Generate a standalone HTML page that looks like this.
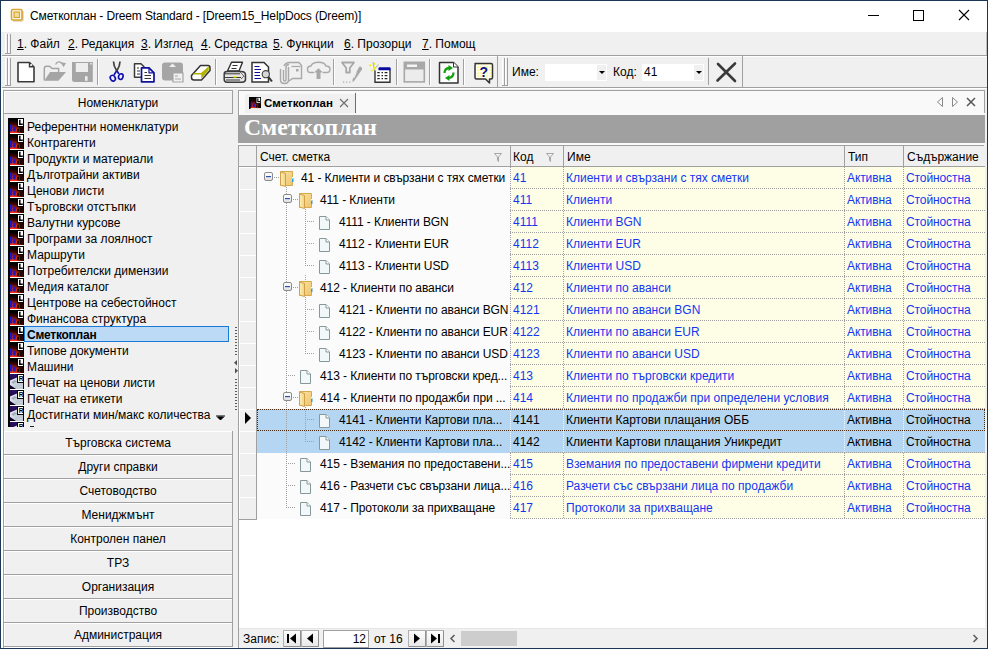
<!DOCTYPE html><html><head><meta charset="utf-8"><style>
*{margin:0;padding:0;box-sizing:border-box}
html,body{width:988px;height:649px;overflow:hidden;background:#f0f0f0;font-family:"Liberation Sans",sans-serif;font-size:12px;color:#000}
div,span{position:absolute}
.t{white-space:nowrap;line-height:14px}
.g{background:#a0a0a0}
.w{background:#fff}
.b{color:#1436f0}
.btn{left:3px;width:230px;height:24px;border-left:1px solid #a0a0a0;border-right:1px solid #a0a0a0;border-bottom:1px solid #a0a0a0;background:#f0f0f0;text-align:center;line-height:24px}
.btn:before{content:"";position:absolute;left:0;top:0;right:0;height:1px;background:#fff}
.btn:after{content:"";position:absolute;left:0;top:0;bottom:0;width:1px;background:#fff}
.li{left:27px;height:16px;line-height:19px;white-space:nowrap}
.dv{width:1px;background-image:linear-gradient(#a0a0a0 50%,transparent 50%);background-size:1px 2px}
.dh{height:1px;background-image:linear-gradient(90deg,#a0a0a0 50%,transparent 50%);background-size:2px 1px}
</style></head><body>
<div class="w" style="left:1px;top:1px;width:986px;height:31px"></div>
<svg style="position:absolute;left:10px;top:8px" width="14" height="14" viewBox="0 0 14 14"><rect x="1.5" y="1.5" width="10.5" height="10.5" rx="1.5" fill="#fff" stroke="#d8a52a" stroke-width="1.6"/><path d="M13 3V12.5Q13 13 12.5 13H3" fill="none" stroke="#c8952a" stroke-width="1" opacity="0.6"/><rect x="4" y="4" width="5.5" height="5.5" fill="#f3dc9a" stroke="#d8a52a" stroke-width="1.2"/></svg>
<div class="t" style="left:30px;top:9px;letter-spacing:-0.14px;color:#000">Сметкоплан - Dreem Standard - [Dreem15_HelpDocs (Dreem)]</div>
<div style="left:868px;top:15px;width:11px;height:1px;background:#000"></div>
<div style="left:913px;top:10px;width:11px;height:11px;border:1px solid #000"></div>
<svg style="position:absolute;left:958px;top:9px" width="12" height="12"><path d="M1 1L11 11M11 1L1 11" stroke="#000" stroke-width="1.1"/></svg>
<div style="left:2px;top:32px;width:985px;height:23px;background:#f0f0f0"></div>
<div class="w" style="left:5px;top:34px;width:1px;height:19px"></div>
<div class="g" style="left:7px;top:34px;width:1px;height:19px"></div>
<div class="w" style="left:8px;top:34px;width:1px;height:19px"></div>
<div class="g" style="left:10px;top:34px;width:1px;height:19px"></div>
<div class="g" style="left:5px;top:53px;width:6px;height:1px"></div>
<div class="t" style="left:17px;top:37px"><u>1</u>. Файл</div>
<div class="t" style="left:68px;top:37px"><u>2</u>. Редакция</div>
<div class="t" style="left:141px;top:37px"><u>3</u>. Изглед</div>
<div class="t" style="left:201px;top:37px"><u>4</u>. Средства</div>
<div class="t" style="left:273px;top:37px"><u>5</u>. Функции</div>
<div class="t" style="left:344px;top:37px"><u>6</u>. Прозорци</div>
<div class="t" style="left:422px;top:37px"><u>7</u>. Помощ</div>
<div class="g" style="left:2px;top:55px;width:985px;height:1px"></div>
<div class="w" style="left:2px;top:56px;width:985px;height:1px"></div>
<div class="w" style="left:5px;top:58px;width:1px;height:27px"></div>
<div class="g" style="left:7px;top:58px;width:1px;height:27px"></div>
<div class="w" style="left:8px;top:58px;width:1px;height:27px"></div>
<div class="g" style="left:10px;top:58px;width:1px;height:27px"></div>
<div class="g" style="left:5px;top:85px;width:6px;height:1px"></div>
<div class="g" style="left:742px;top:56px;width:1px;height:31px"></div>
<div class="g" style="left:2px;top:87px;width:985px;height:1px"></div>
<div class="w" style="left:2px;top:88px;width:985px;height:1px"></div>
<div class="g" style="left:97px;top:59px;width:1px;height:26px"></div>
<div class="w" style="left:98px;top:59px;width:1px;height:26px"></div>
<div class="g" style="left:215px;top:59px;width:1px;height:26px"></div>
<div class="w" style="left:216px;top:59px;width:1px;height:26px"></div>
<div class="g" style="left:333px;top:59px;width:1px;height:26px"></div>
<div class="w" style="left:334px;top:59px;width:1px;height:26px"></div>
<div class="g" style="left:396px;top:59px;width:1px;height:26px"></div>
<div class="w" style="left:397px;top:59px;width:1px;height:26px"></div>
<div class="g" style="left:429px;top:59px;width:1px;height:26px"></div>
<div class="w" style="left:430px;top:59px;width:1px;height:26px"></div>
<div class="g" style="left:463px;top:59px;width:1px;height:26px"></div>
<div class="w" style="left:464px;top:59px;width:1px;height:26px"></div>
<svg style="position:absolute;left:0;top:56px" width="988" height="31" viewBox="0 56 988 31">
<!-- new doc -->
<path d="M18 62.5H29.5L34 67V81.8H18Z" fill="#fff" stroke="#3a3a3a" stroke-width="1.6" stroke-linejoin="round"/>
<path d="M29.5 63V66.8H33.5" fill="none" stroke="#3a3a3a" stroke-width="1.4"/>
<rect x="30.6" y="64.1" width="1.6" height="1.6" fill="#fff"/>
<!-- open folder gray -->
<path d="M44.3 80.5V68.8Q44.3 66.3 46.5 66.3H48.5Q50 66.3 51 67.5L52 68.5H58.6V72" fill="none" stroke="#a5a5a5" stroke-width="1.5"/>
<path d="M44.3 80.8L50 72H66L58.5 80.8Z" fill="#a5a5a5"/>
<path d="M55.5 64.5Q58.5 59.5 62.5 64" fill="none" stroke="#a5a5a5" stroke-width="1.4"/>
<path d="M61 62.5L66 63L63.5 67.2Z" fill="#a5a5a5"/>
<!-- save gray -->
<path d="M72 62H92.8V82H74.5Q72 82 72 79.5Z" fill="#a5a5a5"/>
<rect x="75.8" y="63" width="12.2" height="9" fill="#ededed"/>
<rect x="85" y="76.2" width="2.6" height="4.6" fill="#ededed"/>
<rect x="90.2" y="63" width="1.5" height="1.5" fill="#ededed"/>
<!-- scissors -->
<path d="M113.5 61.5Q113.5 66 116.8 71M120 61.5Q120 66 116.8 71" fill="none" stroke="#404040" stroke-width="1.7"/>
<path d="M116.5 71L114 75M117 71L119 74" stroke="#1010b0" stroke-width="1.6"/>
<ellipse cx="112.8" cy="78.2" rx="2.4" ry="3" transform="rotate(-30 112.8 78.2)" fill="none" stroke="#1010b0" stroke-width="1.6"/>
<ellipse cx="120.8" cy="76.6" rx="2.2" ry="2.9" transform="rotate(20 120.8 76.6)" fill="none" stroke="#1010b0" stroke-width="1.6"/>
<!-- copy -->
<path d="M134.5 63.8H141L144 66.8V77.2H134.5Z" fill="#fff" stroke="#3a3a3a" stroke-width="1.5" stroke-linejoin="round"/>
<path d="M137 68H139M137 71H140M137 74H140" stroke="#333" stroke-width="1"/>
<path d="M141.5 67.8H149L154 72.8V81.8H141.5Z" fill="#fff" stroke="#10109a" stroke-width="1.7" stroke-linejoin="round"/>
<path d="M149 67.8V72.8H154" fill="none" stroke="#10109a" stroke-width="1.2"/>
<path d="M144.5 72.5H147M144.5 75.5H151M144.5 78.5H151" stroke="#333" stroke-width="1"/>
<!-- paste gray -->
<rect x="162" y="62.5" width="21" height="18" rx="3" fill="#a5a5a5"/>
<path d="M169 67L172.5 63.5L176 67Z" fill="#f0f0f0"/>
<path d="M173 73H183V82H173Z" fill="#f0f0f0" stroke="#a5a5a5" stroke-width="1.2"/>
<path d="M175 76H178M175 79H181" stroke="#a5a5a5" stroke-width="1"/>
<!-- eraser -->
<path d="M200.5 65.5H208Q210 65.5 210 68V70.5L201.5 80H194Q191.5 80 191.5 77.5V75.5Z" fill="#fff" stroke="#333" stroke-width="1.5" stroke-linejoin="round"/>
<path d="M193.5 73H201L208.8 66.3V70.3L201.2 78.6V74.6H193.5Z" fill="#b4b400"/>
<!-- printer -->
<path d="M227.5 71L231.5 62.3H242.5L239 71Z" fill="#fff" stroke="#333" stroke-width="1.4" stroke-linejoin="round"/>
<path d="M232.5 65.5H237.5M231.5 68.5H236.5" stroke="#333" stroke-width="1.1"/>
<path d="M224.2 74Q224.2 71.5 227 71.5H241Q245.5 71.5 245.5 75V79.5Q245.5 82.2 242 82.2H227Q224.2 82.2 224.2 79.5Z" fill="#e4e4e4" stroke="#3a3a3a" stroke-width="1.5"/>
<path d="M225 73.8H240M225 77.5H241M226 80H240" stroke="#3a3a3a" stroke-width="1"/>
<path d="M240 72L244.5 76.5M241 79L244 76" stroke="#555" stroke-width="0.8"/>
<rect x="233.5" y="76" width="3" height="1.6" fill="#f0f000"/>
<!-- print preview -->
<path d="M252 62.5H264L268.5 67V82H252Z" fill="#fff" stroke="#333" stroke-width="1.5"/>
<path d="M254.5 66.5H259.5M254.5 69.5H261M254.5 72.5H260M254.5 75.5H260M254.5 78.5H261" stroke="#0a0aa0" stroke-width="1.2"/>
<circle cx="265.8" cy="74.2" r="3.6" fill="#d8d8d8" stroke="#444" stroke-width="1.1"/>
<path d="M268.5 77L272 81.5" stroke="#333" stroke-width="2"/>
<!-- attach gray -->
<path d="M280.5 69V80Q280.5 83.5 284.5 83.5Q288.5 83.5 288.5 80V67" fill="none" stroke="#a8a8a8" stroke-width="1.4"/>
<path d="M283.5 70V79.5Q283.5 81 284.8 81Q286 81 286 79.5V67Q286 64.5 289 64.5" fill="none" stroke="#a8a8a8" stroke-width="1.4"/>
<path d="M284 66Q285.5 62.5 290 62.5H299L301.5 65.5V78.5H292.5L289 81" fill="none" stroke="#a8a8a8" stroke-width="1.4"/>
<path d="M291.5 66.5H300.5" stroke="#a8a8a8" stroke-width="1.2"/>
<rect x="296" y="69" width="2.5" height="2.5" fill="#a8a8a8"/>
<!-- cloud gray -->
<path d="M314 72.5H310.5Q307.5 72.5 307.5 69.2Q307.5 66 311 66Q312.5 62.3 318.5 62.3Q324.5 62.3 326 66Q330 66 330 69.5Q330 72.5 326.5 72.5H323" fill="none" stroke="#a8a8a8" stroke-width="1.4"/>
<path d="M316.5 79V72.5H314L318.5 68.3L323 72.5H320.5V79Z" fill="#a8a8a8"/>
<!-- filter gray -->
<path d="M342 62.5H354L349.8 68V72.5H346.2V68Z" fill="none" stroke="#a8a8a8" stroke-width="1.8" stroke-linejoin="round"/>
<path d="M360 66.5Q362.5 67 362 69.5L354.5 80.5L352.5 82.2L352.6 79.2L358.8 67.6Q359.2 66.6 360 66.5Z" fill="#a8a8a8"/>
<path d="M356.5 72.5L353.8 78" stroke="#f0f0f0" stroke-width="0.9"/>
<rect x="343" y="81.5" width="1.2" height="1.2" fill="#a8a8a8"/><rect x="346" y="81.5" width="1.2" height="1.2" fill="#a8a8a8"/><rect x="349.3" y="81.5" width="1.2" height="1.2" fill="#a8a8a8"/>
<!-- calendar w sparkle -->
<path d="M373 62L374.5 71M378.5 64.5L374.5 69" stroke="#9a9a9a" stroke-width="0.8"/>
<circle cx="370.2" cy="65.3" r="1.1" fill="#f6f000"/><circle cx="374.6" cy="63.8" r="0.9" fill="#f6f000"/><circle cx="374.5" cy="68" r="1.6" fill="#f6f000"/><circle cx="371.8" cy="70.6" r="1" fill="#f6f000"/>
<path d="M375 70.5V82.2H390V69.5" fill="#fff" stroke="#333" stroke-width="1.4"/>
<path d="M378.5 68.2Q378.5 67.2 379.5 67.2H389.5Q390.6 67.2 390.6 68.2V70.2H378.5Z" fill="#0a0aa0"/>
<path d="M377.3 72.6H379.7M381.5 72.6H383M384.6 72.6H387.4M377.3 75.6H379.7M381.5 75.6H383M384.6 75.6H387.4M377.3 78.6H379.7M381.5 78.6H383M384.6 78.6H387.4" stroke="#222" stroke-width="1.2"/>
<!-- window gray -->
<rect x="404.3" y="62.3" width="20" height="19.6" fill="#ececec" stroke="#a8a8a8" stroke-width="1.6"/>
<rect x="404" y="62" width="20.6" height="7.5" fill="#a8a8a8"/>
<rect x="407" y="64.5" width="10" height="2.5" fill="#f4f4f4"/>
<!-- refresh -->
<path d="M439.5 62.5H453.5L458 67V83H439.5Z" fill="#fff" stroke="#333" stroke-width="1.5" stroke-linejoin="round"/>
<path d="M453.5 62.5V67H458" fill="#fff" stroke="#333" stroke-width="1"/>
<path d="M444.5 73Q444.5 68.2 449.5 67.8" fill="none" stroke="#10a010" stroke-width="2.2"/>
<path d="M448.5 65L453 68L448.5 71Z" fill="#10a010"/>
<path d="M453.5 72.5Q453.5 77.5 448.5 78" fill="none" stroke="#10a010" stroke-width="2.2"/>
<path d="M449.5 75L445 78L449.5 81Z" fill="#10a010"/>
<!-- help -->
<defs><pattern id="hp" x="0.5" y="0.5" width="3" height="3" patternUnits="userSpaceOnUse"><rect width="3" height="3" fill="#fff"/><rect width="1.2" height="1.2" fill="#f0f000"/></pattern></defs>
<path d="M475 63.5H491Q492.5 63.5 492.5 65V77.5Q492.5 79 491 79H489.5V83L485.5 79H476.5Q475 79 475 77.5V65Q475 63.5 476.5 63.5Z" fill="url(#hp)" stroke="#333" stroke-width="1.5" stroke-linejoin="round"/>
<text x="483.8" y="76.5" font-family="Liberation Sans" font-weight="bold" font-size="14" text-anchor="middle" fill="#10108a">?</text>
<!-- toolbar 1 end -->
<rect x="497" y="56" width="1" height="31" fill="#a0a0a0"/>
<!-- grip 2 -->
<rect x="502" y="58" width="1" height="27" fill="#fff"/>
<rect x="504" y="58" width="1" height="27" fill="#a0a0a0"/>
<rect x="505" y="58" width="1" height="27" fill="#fff"/>
<rect x="507" y="58" width="1" height="27" fill="#a0a0a0"/>
<rect x="502" y="85" width="6" height="1" fill="#a0a0a0"/>
<!-- combos -->
<rect x="545" y="64" width="62" height="17" fill="#fff"/>
<rect x="597" y="65" width="9" height="15" fill="#f0f0f0"/>
<path d="M599 71H605L602 74Z" fill="#000"/>
<rect x="642" y="64" width="62" height="17" fill="#fff"/>
<rect x="694" y="65" width="9" height="15" fill="#f0f0f0"/>
<path d="M696 71H702L699 74Z" fill="#000"/>
<!-- sep -->
<rect x="708" y="58" width="1" height="27" fill="#a0a0a0"/>
<!-- big X -->
<path d="M718 64L735 81M735 63.5L717.5 80.5" stroke="#3a3a3a" stroke-width="2.6" stroke-linecap="round"/>
</svg>
<div class="t" style="left:512px;top:65px">Име:</div>
<div class="t" style="left:613px;top:65px">Код:</div>
<div class="t" style="left:644px;top:65px">41</div>

<div class="w" style="left:1px;top:88px;width:2px;height:560px"></div>
<div class="w" style="left:1px;top:647px;width:986px;height:1px"></div>
<div class="g" style="left:3px;top:90px;width:1px;height:558px"></div>
<div class="btn" style="top:90px;border-top:1px solid #a0a0a0">Номенклатури</div>
<div style="left:8px;top:118px;width:16px;height:16px"><svg width="16" height="16" viewBox="0 0 16 16" style="position:absolute;left:0;top:0"><defs><radialGradient id="gl" cx="0.25" cy="1" r="1"><stop offset="0" stop-color="#ff3a10"/><stop offset="0.35" stop-color="#d02808"/><stop offset="0.7" stop-color="#3a0400"/><stop offset="1" stop-color="#000"/></radialGradient></defs><rect x="0" y="0" width="16" height="15" fill="#000"/><rect x="2" y="2" width="13" height="13" fill="url(#gl)"/><rect x="9.5" y="0.5" width="6" height="8" fill="#fff" stroke="#000" stroke-width="1"/><path d="M11.8 1.8V6.2H14.8" stroke="#000" stroke-width="1.5" fill="none"/><rect x="2" y="6.5" width="2.3" height="7" fill="#1818c8"/><rect x="5.2" y="9" width="2.5" height="4.5" fill="#1818c8"/><path d="M9 11H11V14H9ZM12 10H14V14H12Z" fill="#1a0800"/><rect x="0" y="15" width="16" height="1" fill="#fff"/><rect x="0" y="0" width="2" height="16" fill="#000"/></svg>
</div>
<div class="li" style="top:118px">Референтни номенклатури</div>
<div style="left:8px;top:134px;width:16px;height:16px"><svg width="16" height="16" viewBox="0 0 16 16" style="position:absolute;left:0;top:0"><defs><radialGradient id="gl" cx="0.25" cy="1" r="1"><stop offset="0" stop-color="#ff3a10"/><stop offset="0.35" stop-color="#d02808"/><stop offset="0.7" stop-color="#3a0400"/><stop offset="1" stop-color="#000"/></radialGradient></defs><rect x="0" y="0" width="16" height="15" fill="#000"/><rect x="2" y="2" width="13" height="13" fill="url(#gl)"/><rect x="9.5" y="0.5" width="6" height="8" fill="#fff" stroke="#000" stroke-width="1"/><path d="M11.8 1.8V6.2H14.8" stroke="#000" stroke-width="1.5" fill="none"/><rect x="2" y="6.5" width="2.3" height="7" fill="#1818c8"/><rect x="5.2" y="9" width="2.5" height="4.5" fill="#1818c8"/><path d="M9 11H11V14H9ZM12 10H14V14H12Z" fill="#1a0800"/><rect x="0" y="15" width="16" height="1" fill="#fff"/><rect x="0" y="0" width="2" height="16" fill="#000"/></svg>
</div>
<div class="li" style="top:134px">Контрагенти</div>
<div style="left:8px;top:150px;width:16px;height:16px"><svg width="16" height="16" viewBox="0 0 16 16" style="position:absolute;left:0;top:0"><defs><radialGradient id="gl" cx="0.25" cy="1" r="1"><stop offset="0" stop-color="#ff3a10"/><stop offset="0.35" stop-color="#d02808"/><stop offset="0.7" stop-color="#3a0400"/><stop offset="1" stop-color="#000"/></radialGradient></defs><rect x="0" y="0" width="16" height="15" fill="#000"/><rect x="2" y="2" width="13" height="13" fill="url(#gl)"/><rect x="9.5" y="0.5" width="6" height="8" fill="#fff" stroke="#000" stroke-width="1"/><path d="M11.8 1.8V6.2H14.8" stroke="#000" stroke-width="1.5" fill="none"/><rect x="2" y="6.5" width="2.3" height="7" fill="#1818c8"/><rect x="5.2" y="9" width="2.5" height="4.5" fill="#1818c8"/><path d="M9 11H11V14H9ZM12 10H14V14H12Z" fill="#1a0800"/><rect x="0" y="15" width="16" height="1" fill="#fff"/><rect x="0" y="0" width="2" height="16" fill="#000"/></svg>
</div>
<div class="li" style="top:150px">Продукти и материали</div>
<div style="left:8px;top:166px;width:16px;height:16px"><svg width="16" height="16" viewBox="0 0 16 16" style="position:absolute;left:0;top:0"><defs><radialGradient id="gl" cx="0.25" cy="1" r="1"><stop offset="0" stop-color="#ff3a10"/><stop offset="0.35" stop-color="#d02808"/><stop offset="0.7" stop-color="#3a0400"/><stop offset="1" stop-color="#000"/></radialGradient></defs><rect x="0" y="0" width="16" height="15" fill="#000"/><rect x="2" y="2" width="13" height="13" fill="url(#gl)"/><rect x="9.5" y="0.5" width="6" height="8" fill="#fff" stroke="#000" stroke-width="1"/><path d="M11.8 1.8V6.2H14.8" stroke="#000" stroke-width="1.5" fill="none"/><rect x="2" y="6.5" width="2.3" height="7" fill="#1818c8"/><rect x="5.2" y="9" width="2.5" height="4.5" fill="#1818c8"/><path d="M9 11H11V14H9ZM12 10H14V14H12Z" fill="#1a0800"/><rect x="0" y="15" width="16" height="1" fill="#fff"/><rect x="0" y="0" width="2" height="16" fill="#000"/></svg>
</div>
<div class="li" style="top:166px">Дълготрайни активи</div>
<div style="left:8px;top:182px;width:16px;height:16px"><svg width="16" height="16" viewBox="0 0 16 16" style="position:absolute;left:0;top:0"><defs><radialGradient id="gl" cx="0.25" cy="1" r="1"><stop offset="0" stop-color="#ff3a10"/><stop offset="0.35" stop-color="#d02808"/><stop offset="0.7" stop-color="#3a0400"/><stop offset="1" stop-color="#000"/></radialGradient></defs><rect x="0" y="0" width="16" height="15" fill="#000"/><rect x="2" y="2" width="13" height="13" fill="url(#gl)"/><rect x="9.5" y="0.5" width="6" height="8" fill="#fff" stroke="#000" stroke-width="1"/><path d="M11.8 1.8V6.2H14.8" stroke="#000" stroke-width="1.5" fill="none"/><rect x="2" y="6.5" width="2.3" height="7" fill="#1818c8"/><rect x="5.2" y="9" width="2.5" height="4.5" fill="#1818c8"/><path d="M9 11H11V14H9ZM12 10H14V14H12Z" fill="#1a0800"/><rect x="0" y="15" width="16" height="1" fill="#fff"/><rect x="0" y="0" width="2" height="16" fill="#000"/></svg>
</div>
<div class="li" style="top:182px">Ценови листи</div>
<div style="left:8px;top:198px;width:16px;height:16px"><svg width="16" height="16" viewBox="0 0 16 16" style="position:absolute;left:0;top:0"><defs><radialGradient id="gl" cx="0.25" cy="1" r="1"><stop offset="0" stop-color="#ff3a10"/><stop offset="0.35" stop-color="#d02808"/><stop offset="0.7" stop-color="#3a0400"/><stop offset="1" stop-color="#000"/></radialGradient></defs><rect x="0" y="0" width="16" height="15" fill="#000"/><rect x="2" y="2" width="13" height="13" fill="url(#gl)"/><rect x="9.5" y="0.5" width="6" height="8" fill="#fff" stroke="#000" stroke-width="1"/><path d="M11.8 1.8V6.2H14.8" stroke="#000" stroke-width="1.5" fill="none"/><rect x="2" y="6.5" width="2.3" height="7" fill="#1818c8"/><rect x="5.2" y="9" width="2.5" height="4.5" fill="#1818c8"/><path d="M9 11H11V14H9ZM12 10H14V14H12Z" fill="#1a0800"/><rect x="0" y="15" width="16" height="1" fill="#fff"/><rect x="0" y="0" width="2" height="16" fill="#000"/></svg>
</div>
<div class="li" style="top:198px">Търговски отстъпки</div>
<div style="left:8px;top:214px;width:16px;height:16px"><svg width="16" height="16" viewBox="0 0 16 16" style="position:absolute;left:0;top:0"><defs><radialGradient id="gl" cx="0.25" cy="1" r="1"><stop offset="0" stop-color="#ff3a10"/><stop offset="0.35" stop-color="#d02808"/><stop offset="0.7" stop-color="#3a0400"/><stop offset="1" stop-color="#000"/></radialGradient></defs><rect x="0" y="0" width="16" height="15" fill="#000"/><rect x="2" y="2" width="13" height="13" fill="url(#gl)"/><rect x="9.5" y="0.5" width="6" height="8" fill="#fff" stroke="#000" stroke-width="1"/><path d="M11.8 1.8V6.2H14.8" stroke="#000" stroke-width="1.5" fill="none"/><rect x="2" y="6.5" width="2.3" height="7" fill="#1818c8"/><rect x="5.2" y="9" width="2.5" height="4.5" fill="#1818c8"/><path d="M9 11H11V14H9ZM12 10H14V14H12Z" fill="#1a0800"/><rect x="0" y="15" width="16" height="1" fill="#fff"/><rect x="0" y="0" width="2" height="16" fill="#000"/></svg>
</div>
<div class="li" style="top:214px">Валутни курсове</div>
<div style="left:8px;top:230px;width:16px;height:16px"><svg width="16" height="16" viewBox="0 0 16 16" style="position:absolute;left:0;top:0"><defs><radialGradient id="gl" cx="0.25" cy="1" r="1"><stop offset="0" stop-color="#ff3a10"/><stop offset="0.35" stop-color="#d02808"/><stop offset="0.7" stop-color="#3a0400"/><stop offset="1" stop-color="#000"/></radialGradient></defs><rect x="0" y="0" width="16" height="15" fill="#000"/><rect x="2" y="2" width="13" height="13" fill="url(#gl)"/><rect x="9.5" y="0.5" width="6" height="8" fill="#fff" stroke="#000" stroke-width="1"/><path d="M11.8 1.8V6.2H14.8" stroke="#000" stroke-width="1.5" fill="none"/><rect x="2" y="6.5" width="2.3" height="7" fill="#1818c8"/><rect x="5.2" y="9" width="2.5" height="4.5" fill="#1818c8"/><path d="M9 11H11V14H9ZM12 10H14V14H12Z" fill="#1a0800"/><rect x="0" y="15" width="16" height="1" fill="#fff"/><rect x="0" y="0" width="2" height="16" fill="#000"/></svg>
</div>
<div class="li" style="top:230px">Програми за лоялност</div>
<div style="left:8px;top:246px;width:16px;height:16px"><svg width="16" height="16" viewBox="0 0 16 16" style="position:absolute;left:0;top:0"><defs><radialGradient id="gl" cx="0.25" cy="1" r="1"><stop offset="0" stop-color="#ff3a10"/><stop offset="0.35" stop-color="#d02808"/><stop offset="0.7" stop-color="#3a0400"/><stop offset="1" stop-color="#000"/></radialGradient></defs><rect x="0" y="0" width="16" height="15" fill="#000"/><rect x="2" y="2" width="13" height="13" fill="url(#gl)"/><rect x="9.5" y="0.5" width="6" height="8" fill="#fff" stroke="#000" stroke-width="1"/><path d="M11.8 1.8V6.2H14.8" stroke="#000" stroke-width="1.5" fill="none"/><rect x="2" y="6.5" width="2.3" height="7" fill="#1818c8"/><rect x="5.2" y="9" width="2.5" height="4.5" fill="#1818c8"/><path d="M9 11H11V14H9ZM12 10H14V14H12Z" fill="#1a0800"/><rect x="0" y="15" width="16" height="1" fill="#fff"/><rect x="0" y="0" width="2" height="16" fill="#000"/></svg>
</div>
<div class="li" style="top:246px">Маршрути</div>
<div style="left:8px;top:262px;width:16px;height:16px"><svg width="16" height="16" viewBox="0 0 16 16" style="position:absolute;left:0;top:0"><defs><radialGradient id="gl" cx="0.25" cy="1" r="1"><stop offset="0" stop-color="#ff3a10"/><stop offset="0.35" stop-color="#d02808"/><stop offset="0.7" stop-color="#3a0400"/><stop offset="1" stop-color="#000"/></radialGradient></defs><rect x="0" y="0" width="16" height="15" fill="#000"/><rect x="2" y="2" width="13" height="13" fill="url(#gl)"/><rect x="9.5" y="0.5" width="6" height="8" fill="#fff" stroke="#000" stroke-width="1"/><path d="M11.8 1.8V6.2H14.8" stroke="#000" stroke-width="1.5" fill="none"/><rect x="2" y="6.5" width="2.3" height="7" fill="#1818c8"/><rect x="5.2" y="9" width="2.5" height="4.5" fill="#1818c8"/><path d="M9 11H11V14H9ZM12 10H14V14H12Z" fill="#1a0800"/><rect x="0" y="15" width="16" height="1" fill="#fff"/><rect x="0" y="0" width="2" height="16" fill="#000"/></svg>
</div>
<div class="li" style="top:262px">Потребителски димензии</div>
<div style="left:8px;top:278px;width:16px;height:16px"><svg width="16" height="16" viewBox="0 0 16 16" style="position:absolute;left:0;top:0"><defs><radialGradient id="gl" cx="0.25" cy="1" r="1"><stop offset="0" stop-color="#ff3a10"/><stop offset="0.35" stop-color="#d02808"/><stop offset="0.7" stop-color="#3a0400"/><stop offset="1" stop-color="#000"/></radialGradient></defs><rect x="0" y="0" width="16" height="15" fill="#000"/><rect x="2" y="2" width="13" height="13" fill="url(#gl)"/><rect x="9.5" y="0.5" width="6" height="8" fill="#fff" stroke="#000" stroke-width="1"/><path d="M11.8 1.8V6.2H14.8" stroke="#000" stroke-width="1.5" fill="none"/><rect x="2" y="6.5" width="2.3" height="7" fill="#1818c8"/><rect x="5.2" y="9" width="2.5" height="4.5" fill="#1818c8"/><path d="M9 11H11V14H9ZM12 10H14V14H12Z" fill="#1a0800"/><rect x="0" y="15" width="16" height="1" fill="#fff"/><rect x="0" y="0" width="2" height="16" fill="#000"/></svg>
</div>
<div class="li" style="top:278px">Медия каталог</div>
<div style="left:8px;top:294px;width:16px;height:16px"><svg width="16" height="16" viewBox="0 0 16 16" style="position:absolute;left:0;top:0"><defs><radialGradient id="gl" cx="0.25" cy="1" r="1"><stop offset="0" stop-color="#ff3a10"/><stop offset="0.35" stop-color="#d02808"/><stop offset="0.7" stop-color="#3a0400"/><stop offset="1" stop-color="#000"/></radialGradient></defs><rect x="0" y="0" width="16" height="15" fill="#000"/><rect x="2" y="2" width="13" height="13" fill="url(#gl)"/><rect x="9.5" y="0.5" width="6" height="8" fill="#fff" stroke="#000" stroke-width="1"/><path d="M11.8 1.8V6.2H14.8" stroke="#000" stroke-width="1.5" fill="none"/><rect x="2" y="6.5" width="2.3" height="7" fill="#1818c8"/><rect x="5.2" y="9" width="2.5" height="4.5" fill="#1818c8"/><path d="M9 11H11V14H9ZM12 10H14V14H12Z" fill="#1a0800"/><rect x="0" y="15" width="16" height="1" fill="#fff"/><rect x="0" y="0" width="2" height="16" fill="#000"/></svg>
</div>
<div class="li" style="top:294px">Центрове на себестойност</div>
<div style="left:8px;top:310px;width:16px;height:16px"><svg width="16" height="16" viewBox="0 0 16 16" style="position:absolute;left:0;top:0"><defs><radialGradient id="gl" cx="0.25" cy="1" r="1"><stop offset="0" stop-color="#ff3a10"/><stop offset="0.35" stop-color="#d02808"/><stop offset="0.7" stop-color="#3a0400"/><stop offset="1" stop-color="#000"/></radialGradient></defs><rect x="0" y="0" width="16" height="15" fill="#000"/><rect x="2" y="2" width="13" height="13" fill="url(#gl)"/><rect x="9.5" y="0.5" width="6" height="8" fill="#fff" stroke="#000" stroke-width="1"/><path d="M11.8 1.8V6.2H14.8" stroke="#000" stroke-width="1.5" fill="none"/><rect x="2" y="6.5" width="2.3" height="7" fill="#1818c8"/><rect x="5.2" y="9" width="2.5" height="4.5" fill="#1818c8"/><path d="M9 11H11V14H9ZM12 10H14V14H12Z" fill="#1a0800"/><rect x="0" y="15" width="16" height="1" fill="#fff"/><rect x="0" y="0" width="2" height="16" fill="#000"/></svg>
</div>
<div class="li" style="top:310px">Финансова структура</div>
<div style="left:8px;top:326px;width:16px;height:16px"><svg width="16" height="16" viewBox="0 0 16 16" style="position:absolute;left:0;top:0"><defs><radialGradient id="gl" cx="0.25" cy="1" r="1"><stop offset="0" stop-color="#ff3a10"/><stop offset="0.35" stop-color="#d02808"/><stop offset="0.7" stop-color="#3a0400"/><stop offset="1" stop-color="#000"/></radialGradient></defs><rect x="0" y="0" width="16" height="15" fill="#000"/><rect x="2" y="2" width="13" height="13" fill="url(#gl)"/><rect x="9.5" y="0.5" width="6" height="8" fill="#fff" stroke="#000" stroke-width="1"/><path d="M11.8 1.8V6.2H14.8" stroke="#000" stroke-width="1.5" fill="none"/><rect x="2" y="6.5" width="2.3" height="7" fill="#1818c8"/><rect x="5.2" y="9" width="2.5" height="4.5" fill="#1818c8"/><path d="M9 11H11V14H9ZM12 10H14V14H12Z" fill="#1a0800"/><rect x="0" y="15" width="16" height="1" fill="#fff"/><rect x="0" y="0" width="2" height="16" fill="#000"/></svg>
</div>
<div style="left:24px;top:326px;width:205px;height:16px;background:#bcdaf5;border:1px solid #1a7ad8"></div>
<div class="li" style="top:326px;font-weight:bold;letter-spacing:-0.25px">Сметкоплан</div>
<div style="left:8px;top:342px;width:16px;height:16px"><svg width="16" height="16" viewBox="0 0 16 16" style="position:absolute;left:0;top:0"><defs><radialGradient id="gl" cx="0.25" cy="1" r="1"><stop offset="0" stop-color="#ff3a10"/><stop offset="0.35" stop-color="#d02808"/><stop offset="0.7" stop-color="#3a0400"/><stop offset="1" stop-color="#000"/></radialGradient></defs><rect x="0" y="0" width="16" height="15" fill="#000"/><rect x="2" y="2" width="13" height="13" fill="url(#gl)"/><rect x="9.5" y="0.5" width="6" height="8" fill="#fff" stroke="#000" stroke-width="1"/><path d="M11.8 1.8V6.2H14.8" stroke="#000" stroke-width="1.5" fill="none"/><rect x="2" y="6.5" width="2.3" height="7" fill="#1818c8"/><rect x="5.2" y="9" width="2.5" height="4.5" fill="#1818c8"/><path d="M9 11H11V14H9ZM12 10H14V14H12Z" fill="#1a0800"/><rect x="0" y="15" width="16" height="1" fill="#fff"/><rect x="0" y="0" width="2" height="16" fill="#000"/></svg>
</div>
<div class="li" style="top:342px">Типове документи</div>
<div style="left:8px;top:358px;width:16px;height:16px"><svg width="16" height="16" viewBox="0 0 16 16" style="position:absolute;left:0;top:0"><defs><radialGradient id="gl" cx="0.25" cy="1" r="1"><stop offset="0" stop-color="#ff3a10"/><stop offset="0.35" stop-color="#d02808"/><stop offset="0.7" stop-color="#3a0400"/><stop offset="1" stop-color="#000"/></radialGradient></defs><rect x="0" y="0" width="16" height="15" fill="#000"/><rect x="2" y="2" width="13" height="13" fill="url(#gl)"/><rect x="9.5" y="0.5" width="6" height="8" fill="#fff" stroke="#000" stroke-width="1"/><path d="M11.8 1.8V6.2H14.8" stroke="#000" stroke-width="1.5" fill="none"/><rect x="2" y="6.5" width="2.3" height="7" fill="#1818c8"/><rect x="5.2" y="9" width="2.5" height="4.5" fill="#1818c8"/><path d="M9 11H11V14H9ZM12 10H14V14H12Z" fill="#1a0800"/><rect x="0" y="15" width="16" height="1" fill="#fff"/><rect x="0" y="0" width="2" height="16" fill="#000"/></svg>
</div>
<div class="li" style="top:358px">Машини</div>
<div style="left:8px;top:374px;width:16px;height:16px"><svg width="16" height="16" viewBox="0 0 16 16" style="position:absolute;left:0;top:0"><defs><linearGradient id="gr" x1="0" y1="0" x2="0" y2="1"><stop offset="0" stop-color="#2a1068"/><stop offset="1" stop-color="#06001a"/></linearGradient><linearGradient id="gs" x1="0" y1="0" x2="1" y2="1"><stop offset="0" stop-color="#eef2f8"/><stop offset="1" stop-color="#b8c0cc"/></linearGradient></defs><rect x="0" y="0" width="16" height="15" fill="url(#gr)"/><path d="M2 6.5L10 3V15H8L2 11Z" fill="url(#gs)"/><path d="M10 8H15V15H8L10 9Z" fill="#c4ccd8"/><path d="M3 8L7 6L9 7.5L5 10Z" fill="#8890a0" opacity="0.6"/><rect x="9.5" y="0.5" width="6" height="8" fill="#fff" stroke="#000" stroke-width="1"/><text x="10.8" y="6.8" font-family="Liberation Sans" font-size="6.5" font-weight="bold" fill="#000">R</text><rect x="0" y="15" width="16" height="1" fill="#fff"/><rect x="0" y="0" width="2" height="16" fill="#000"/></svg>
</div>
<div class="li" style="top:374px">Печат на ценови листи</div>
<div style="left:8px;top:390px;width:16px;height:16px"><svg width="16" height="16" viewBox="0 0 16 16" style="position:absolute;left:0;top:0"><defs><linearGradient id="gr" x1="0" y1="0" x2="0" y2="1"><stop offset="0" stop-color="#2a1068"/><stop offset="1" stop-color="#06001a"/></linearGradient><linearGradient id="gs" x1="0" y1="0" x2="1" y2="1"><stop offset="0" stop-color="#eef2f8"/><stop offset="1" stop-color="#b8c0cc"/></linearGradient></defs><rect x="0" y="0" width="16" height="15" fill="url(#gr)"/><path d="M2 6.5L10 3V15H8L2 11Z" fill="url(#gs)"/><path d="M10 8H15V15H8L10 9Z" fill="#c4ccd8"/><path d="M3 8L7 6L9 7.5L5 10Z" fill="#8890a0" opacity="0.6"/><rect x="9.5" y="0.5" width="6" height="8" fill="#fff" stroke="#000" stroke-width="1"/><text x="10.8" y="6.8" font-family="Liberation Sans" font-size="6.5" font-weight="bold" fill="#000">R</text><rect x="0" y="15" width="16" height="1" fill="#fff"/><rect x="0" y="0" width="2" height="16" fill="#000"/></svg>
</div>
<div class="li" style="top:390px">Печат на етикети</div>
<div style="left:8px;top:406px;width:16px;height:16px"><svg width="16" height="16" viewBox="0 0 16 16" style="position:absolute;left:0;top:0"><defs><linearGradient id="gr" x1="0" y1="0" x2="0" y2="1"><stop offset="0" stop-color="#2a1068"/><stop offset="1" stop-color="#06001a"/></linearGradient><linearGradient id="gs" x1="0" y1="0" x2="1" y2="1"><stop offset="0" stop-color="#eef2f8"/><stop offset="1" stop-color="#b8c0cc"/></linearGradient></defs><rect x="0" y="0" width="16" height="15" fill="url(#gr)"/><path d="M2 6.5L10 3V15H8L2 11Z" fill="url(#gs)"/><path d="M10 8H15V15H8L10 9Z" fill="#c4ccd8"/><path d="M3 8L7 6L9 7.5L5 10Z" fill="#8890a0" opacity="0.6"/><rect x="9.5" y="0.5" width="6" height="8" fill="#fff" stroke="#000" stroke-width="1"/><text x="10.8" y="6.8" font-family="Liberation Sans" font-size="6.5" font-weight="bold" fill="#000">R</text><rect x="0" y="15" width="16" height="1" fill="#fff"/><rect x="0" y="0" width="2" height="16" fill="#000"/></svg>
</div>
<div class="li" style="top:406px">Достигнати мин/макс количества</div>
<div style="left:30px;top:426px;width:4px;height:1px;background:#222"></div>
<div style="left:8px;top:422px;width:16px;height:5px;overflow:hidden"><svg width="16" height="16" viewBox="0 0 16 16" style="position:absolute;left:0;top:0"><defs><linearGradient id="gr" x1="0" y1="0" x2="0" y2="1"><stop offset="0" stop-color="#2a1068"/><stop offset="1" stop-color="#06001a"/></linearGradient><linearGradient id="gs" x1="0" y1="0" x2="1" y2="1"><stop offset="0" stop-color="#eef2f8"/><stop offset="1" stop-color="#b8c0cc"/></linearGradient></defs><rect x="0" y="0" width="16" height="15" fill="url(#gr)"/><path d="M2 6.5L10 3V15H8L2 11Z" fill="url(#gs)"/><path d="M10 8H15V15H8L10 9Z" fill="#c4ccd8"/><path d="M3 8L7 6L9 7.5L5 10Z" fill="#8890a0" opacity="0.6"/><rect x="9.5" y="0.5" width="6" height="8" fill="#fff" stroke="#000" stroke-width="1"/><text x="10.8" y="6.8" font-family="Liberation Sans" font-size="6.5" font-weight="bold" fill="#000">R</text><rect x="0" y="15" width="16" height="1" fill="#fff"/><rect x="0" y="0" width="2" height="16" fill="#000"/></svg>
</div>
<svg style="position:absolute;left:216px;top:415px" width="10" height="6"><path d="M0 1H9M1.5 2L4.5 5L7.5 2Z" fill="#000" stroke="#000" stroke-width="1"/></svg>
<div class="btn" style="top:431px">Търговска система</div>
<div class="btn" style="top:455px">Други справки</div>
<div class="btn" style="top:479px">Счетоводство</div>
<div class="btn" style="top:503px">Мениджмънт</div>
<div class="btn" style="top:527px">Контролен панел</div>
<div class="btn" style="top:551px">ТРЗ</div>
<div class="btn" style="top:575px">Организация</div>
<div class="btn" style="top:599px">Производство</div>
<div class="btn" style="top:623px">Администрация</div>
<div style="left:235px;top:327px;width:2px;height:30px;background-image:linear-gradient(#5a5a5a 34%,transparent 34%);background-size:2px 3px"></div>
<svg style="position:absolute;left:232px;top:358px" width="7" height="17" viewBox="232 358 7 17"><path d="M237 360V365.5L234 362.7Z" fill="#505050"/><path d="M235 368V373.5L238 370.7Z" fill="#505050"/></svg>
<div style="left:235px;top:379px;width:2px;height:33px;background-image:linear-gradient(#5a5a5a 34%,transparent 34%);background-size:2px 3px"></div>
<div class="g" style="left:238px;top:90px;width:1px;height:558px"></div>
<div class="g" style="left:238px;top:90px;width:747px;height:1px"></div>
<div style="left:239px;top:91px;width:746px;height:24px;background:#f9f9f9"></div>
<div class="w" style="left:239px;top:91px;width:1px;height:24px"></div>
<div class="g" style="left:984px;top:90px;width:1px;height:23px"></div>
<div style="left:245px;top:94px;width:110px;height:19px;background:#f0f0f0"></div>
<div style="left:355px;top:93px;width:1px;height:20px;background:#6e6e6e"></div>
<div style="left:249px;top:97px;width:12px;height:12px;overflow:hidden"><div style="left:0;top:0;transform:scale(0.75);transform-origin:0 0"><svg width="16" height="16" viewBox="0 0 16 16" style="position:absolute;left:0;top:0"><defs><radialGradient id="gl" cx="0.25" cy="1" r="1"><stop offset="0" stop-color="#ff3a10"/><stop offset="0.35" stop-color="#d02808"/><stop offset="0.7" stop-color="#3a0400"/><stop offset="1" stop-color="#000"/></radialGradient></defs><rect x="0" y="0" width="16" height="15" fill="#000"/><rect x="2" y="2" width="13" height="13" fill="url(#gl)"/><rect x="9.5" y="0.5" width="6" height="8" fill="#fff" stroke="#000" stroke-width="1"/><path d="M11.8 1.8V6.2H14.8" stroke="#000" stroke-width="1.5" fill="none"/><rect x="2" y="6.5" width="2.3" height="7" fill="#1818c8"/><rect x="5.2" y="9" width="2.5" height="4.5" fill="#1818c8"/><path d="M9 11H11V14H9ZM12 10H14V14H12Z" fill="#1a0800"/><rect x="0" y="15" width="16" height="1" fill="#fff"/><rect x="0" y="0" width="2" height="16" fill="#000"/></svg>
</div></div>
<div class="t" style="left:264px;top:96px;font-weight:bold;font-size:11.5px">Сметкоплан</div>
<svg style="position:absolute;left:339px;top:98px" width="10" height="10"><path d="M1 1L9 9M9 1L1 9" stroke="#707070" stroke-width="1.2"/></svg>
<svg style="position:absolute;left:935px;top:96px" width="42" height="12"><path d="M7.5 1.5V10.5L2.5 6Z" fill="none" stroke="#888" stroke-width="1"/><path d="M17.5 1.5V10.5L22.5 6Z" fill="none" stroke="#888" stroke-width="1"/><path d="M32 2L40 10M40 2L32 10" stroke="#555" stroke-width="1.5"/></svg>
<div style="left:238px;top:115px;width:747px;height:28px;background:#a0a0a0"></div>
<div class="t" style="left:244px;top:114px;font-family:'Liberation Serif',serif;font-weight:bold;font-size:23.7px;line-height:26px;color:#fff">Сметкоплан</div>
<div style="left:238px;top:143px;width:747px;height:2px;background:#fafafa"></div>
<div class="w" style="left:239px;top:167px;width:746px;height:461px"></div>
<div style="left:238px;top:145px;width:746px;height:1px;background:#a0a0a0"></div>
<div style="left:239px;top:146px;width:746px;height:20px;background:#f0f0f0"></div>
<div style="left:238px;top:166px;width:747px;height:1px;background:#a0a0a0"></div>
<div class="g" style="left:256px;top:145px;width:1px;height:22px"></div>
<div class="g" style="left:510px;top:145px;width:1px;height:22px"></div>
<div class="g" style="left:563px;top:145px;width:1px;height:22px"></div>
<div class="g" style="left:844px;top:145px;width:1px;height:22px"></div>
<div class="g" style="left:903px;top:145px;width:1px;height:22px"></div>
<div class="t" style="left:260px;top:150px">Счет. сметка</div>
<div class="t" style="left:513px;top:150px">Код</div>
<div class="t" style="left:567px;top:150px">Име</div>
<div class="t" style="left:848px;top:150px">Тип</div>
<div class="t" style="left:907px;top:150px">Съдържание</div>
<svg style="position:absolute;left:494px;top:153px" width="8" height="9"><path d="M0.5 0.5H7.5L4.5 4V8.5L3.5 7.5V4Z" fill="none" stroke="#a8a8a8" stroke-width="1"/></svg>
<svg style="position:absolute;left:546px;top:153px" width="8" height="9"><path d="M0.5 0.5H7.5L4.5 4V8.5L3.5 7.5V4Z" fill="none" stroke="#a8a8a8" stroke-width="1"/></svg>
<div style="left:239px;top:167px;width:17px;height:22px;background:#f0f0f0;border-top:1px solid #fff;border-left:1px solid #fff"></div>
<div style="left:257px;top:167px;width:253px;height:22px;background:#fbfbfb"></div>
<div style="left:511px;top:167px;width:474px;height:22px;background:#fefee6"></div>
<div class="dh" style="left:510px;top:188px;width:475px"></div>
<div class="dv" style="left:510px;top:167px;height:22px"></div>
<div class="dv" style="left:563px;top:167px;height:22px"></div>
<div class="dv" style="left:844px;top:167px;height:22px"></div>
<div class="dv" style="left:903px;top:167px;height:22px"></div>
<div class="t" style="left:301px;top:171px;letter-spacing:-0.08px">41 - Клиенти и свързани с тях сметки</div>
<div class="t b" style="left:513px;top:171px">41</div>
<div class="t b" style="left:566px;top:171px">Клиенти и свързани с тях сметки</div>
<div class="t b" style="left:847px;top:171px;letter-spacing:-0.1px">Активна</div>
<div class="t b" style="left:906px;top:171px;letter-spacing:-0.1px">Стойностна</div>
<div style="left:239px;top:189px;width:17px;height:22px;background:#f0f0f0;border-top:1px solid #fff;border-left:1px solid #fff"></div>
<div style="left:257px;top:189px;width:253px;height:22px;background:#fbfbfb"></div>
<div style="left:511px;top:189px;width:474px;height:22px;background:#fefee6"></div>
<div class="dh" style="left:510px;top:210px;width:475px"></div>
<div class="dv" style="left:510px;top:189px;height:22px"></div>
<div class="dv" style="left:563px;top:189px;height:22px"></div>
<div class="dv" style="left:844px;top:189px;height:22px"></div>
<div class="dv" style="left:903px;top:189px;height:22px"></div>
<div class="t" style="left:320px;top:193px;letter-spacing:-0.08px">411 - Клиенти</div>
<div class="t b" style="left:513px;top:193px">411</div>
<div class="t b" style="left:566px;top:193px">Клиенти</div>
<div class="t b" style="left:847px;top:193px;letter-spacing:-0.1px">Активна</div>
<div class="t b" style="left:906px;top:193px;letter-spacing:-0.1px">Стойностна</div>
<div style="left:239px;top:211px;width:17px;height:22px;background:#f0f0f0;border-top:1px solid #fff;border-left:1px solid #fff"></div>
<div style="left:257px;top:211px;width:253px;height:22px;background:#fbfbfb"></div>
<div style="left:511px;top:211px;width:474px;height:22px;background:#fefee6"></div>
<div class="dh" style="left:510px;top:232px;width:475px"></div>
<div class="dv" style="left:510px;top:211px;height:22px"></div>
<div class="dv" style="left:563px;top:211px;height:22px"></div>
<div class="dv" style="left:844px;top:211px;height:22px"></div>
<div class="dv" style="left:903px;top:211px;height:22px"></div>
<div class="t" style="left:339px;top:215px;letter-spacing:-0.08px">4111 - Клиенти BGN</div>
<div class="t b" style="left:513px;top:215px">4111</div>
<div class="t b" style="left:566px;top:215px">Клиенти BGN</div>
<div class="t b" style="left:847px;top:215px;letter-spacing:-0.1px">Активна</div>
<div class="t b" style="left:906px;top:215px;letter-spacing:-0.1px">Стойностна</div>
<div style="left:239px;top:233px;width:17px;height:22px;background:#f0f0f0;border-top:1px solid #fff;border-left:1px solid #fff"></div>
<div style="left:257px;top:233px;width:253px;height:22px;background:#fbfbfb"></div>
<div style="left:511px;top:233px;width:474px;height:22px;background:#fefee6"></div>
<div class="dh" style="left:510px;top:254px;width:475px"></div>
<div class="dv" style="left:510px;top:233px;height:22px"></div>
<div class="dv" style="left:563px;top:233px;height:22px"></div>
<div class="dv" style="left:844px;top:233px;height:22px"></div>
<div class="dv" style="left:903px;top:233px;height:22px"></div>
<div class="t" style="left:339px;top:237px;letter-spacing:-0.08px">4112 - Клиенти EUR</div>
<div class="t b" style="left:513px;top:237px">4112</div>
<div class="t b" style="left:566px;top:237px">Клиенти EUR</div>
<div class="t b" style="left:847px;top:237px;letter-spacing:-0.1px">Активна</div>
<div class="t b" style="left:906px;top:237px;letter-spacing:-0.1px">Стойностна</div>
<div style="left:239px;top:255px;width:17px;height:22px;background:#f0f0f0;border-top:1px solid #fff;border-left:1px solid #fff"></div>
<div style="left:257px;top:255px;width:253px;height:22px;background:#fbfbfb"></div>
<div style="left:511px;top:255px;width:474px;height:22px;background:#fefee6"></div>
<div class="dh" style="left:510px;top:276px;width:475px"></div>
<div class="dv" style="left:510px;top:255px;height:22px"></div>
<div class="dv" style="left:563px;top:255px;height:22px"></div>
<div class="dv" style="left:844px;top:255px;height:22px"></div>
<div class="dv" style="left:903px;top:255px;height:22px"></div>
<div class="t" style="left:339px;top:259px;letter-spacing:-0.08px">4113 - Клиенти USD</div>
<div class="t b" style="left:513px;top:259px">4113</div>
<div class="t b" style="left:566px;top:259px">Клиенти USD</div>
<div class="t b" style="left:847px;top:259px;letter-spacing:-0.1px">Активна</div>
<div class="t b" style="left:906px;top:259px;letter-spacing:-0.1px">Стойностна</div>
<div style="left:239px;top:277px;width:17px;height:22px;background:#f0f0f0;border-top:1px solid #fff;border-left:1px solid #fff"></div>
<div style="left:257px;top:277px;width:253px;height:22px;background:#fbfbfb"></div>
<div style="left:511px;top:277px;width:474px;height:22px;background:#fefee6"></div>
<div class="dh" style="left:510px;top:298px;width:475px"></div>
<div class="dv" style="left:510px;top:277px;height:22px"></div>
<div class="dv" style="left:563px;top:277px;height:22px"></div>
<div class="dv" style="left:844px;top:277px;height:22px"></div>
<div class="dv" style="left:903px;top:277px;height:22px"></div>
<div class="t" style="left:320px;top:281px;letter-spacing:-0.08px">412 - Клиенти по аванси</div>
<div class="t b" style="left:513px;top:281px">412</div>
<div class="t b" style="left:566px;top:281px">Клиенти по аванси</div>
<div class="t b" style="left:847px;top:281px;letter-spacing:-0.1px">Активна</div>
<div class="t b" style="left:906px;top:281px;letter-spacing:-0.1px">Стойностна</div>
<div style="left:239px;top:299px;width:17px;height:22px;background:#f0f0f0;border-top:1px solid #fff;border-left:1px solid #fff"></div>
<div style="left:257px;top:299px;width:253px;height:22px;background:#fbfbfb"></div>
<div style="left:511px;top:299px;width:474px;height:22px;background:#fefee6"></div>
<div class="dh" style="left:510px;top:320px;width:475px"></div>
<div class="dv" style="left:510px;top:299px;height:22px"></div>
<div class="dv" style="left:563px;top:299px;height:22px"></div>
<div class="dv" style="left:844px;top:299px;height:22px"></div>
<div class="dv" style="left:903px;top:299px;height:22px"></div>
<div class="t" style="left:339px;top:303px;letter-spacing:-0.08px">4121 - Клиенти по аванси BGN</div>
<div class="t b" style="left:513px;top:303px">4121</div>
<div class="t b" style="left:566px;top:303px">Клиенти по аванси BGN</div>
<div class="t b" style="left:847px;top:303px;letter-spacing:-0.1px">Активна</div>
<div class="t b" style="left:906px;top:303px;letter-spacing:-0.1px">Стойностна</div>
<div style="left:239px;top:321px;width:17px;height:22px;background:#f0f0f0;border-top:1px solid #fff;border-left:1px solid #fff"></div>
<div style="left:257px;top:321px;width:253px;height:22px;background:#fbfbfb"></div>
<div style="left:511px;top:321px;width:474px;height:22px;background:#fefee6"></div>
<div class="dh" style="left:510px;top:342px;width:475px"></div>
<div class="dv" style="left:510px;top:321px;height:22px"></div>
<div class="dv" style="left:563px;top:321px;height:22px"></div>
<div class="dv" style="left:844px;top:321px;height:22px"></div>
<div class="dv" style="left:903px;top:321px;height:22px"></div>
<div class="t" style="left:339px;top:325px;letter-spacing:-0.08px">4122 - Клиенти по аванси EUR</div>
<div class="t b" style="left:513px;top:325px">4122</div>
<div class="t b" style="left:566px;top:325px">Клиенти по аванси EUR</div>
<div class="t b" style="left:847px;top:325px;letter-spacing:-0.1px">Активна</div>
<div class="t b" style="left:906px;top:325px;letter-spacing:-0.1px">Стойностна</div>
<div style="left:239px;top:343px;width:17px;height:22px;background:#f0f0f0;border-top:1px solid #fff;border-left:1px solid #fff"></div>
<div style="left:257px;top:343px;width:253px;height:22px;background:#fbfbfb"></div>
<div style="left:511px;top:343px;width:474px;height:22px;background:#fefee6"></div>
<div class="dh" style="left:510px;top:364px;width:475px"></div>
<div class="dv" style="left:510px;top:343px;height:22px"></div>
<div class="dv" style="left:563px;top:343px;height:22px"></div>
<div class="dv" style="left:844px;top:343px;height:22px"></div>
<div class="dv" style="left:903px;top:343px;height:22px"></div>
<div class="t" style="left:339px;top:347px;letter-spacing:-0.08px">4123 - Клиенти по аванси USD</div>
<div class="t b" style="left:513px;top:347px">4123</div>
<div class="t b" style="left:566px;top:347px">Клиенти по аванси USD</div>
<div class="t b" style="left:847px;top:347px;letter-spacing:-0.1px">Активна</div>
<div class="t b" style="left:906px;top:347px;letter-spacing:-0.1px">Стойностна</div>
<div style="left:239px;top:365px;width:17px;height:22px;background:#f0f0f0;border-top:1px solid #fff;border-left:1px solid #fff"></div>
<div style="left:257px;top:365px;width:253px;height:22px;background:#fbfbfb"></div>
<div style="left:511px;top:365px;width:474px;height:22px;background:#fefee6"></div>
<div class="dh" style="left:510px;top:386px;width:475px"></div>
<div class="dv" style="left:510px;top:365px;height:22px"></div>
<div class="dv" style="left:563px;top:365px;height:22px"></div>
<div class="dv" style="left:844px;top:365px;height:22px"></div>
<div class="dv" style="left:903px;top:365px;height:22px"></div>
<div class="t" style="left:320px;top:369px;letter-spacing:-0.08px">413 - Клиенти по търговски кред...</div>
<div class="t b" style="left:513px;top:369px">413</div>
<div class="t b" style="left:566px;top:369px">Клиенти по търговски кредити</div>
<div class="t b" style="left:847px;top:369px;letter-spacing:-0.1px">Активна</div>
<div class="t b" style="left:906px;top:369px;letter-spacing:-0.1px">Стойностна</div>
<div style="left:239px;top:387px;width:17px;height:22px;background:#f0f0f0;border-top:1px solid #fff;border-left:1px solid #fff"></div>
<div style="left:257px;top:387px;width:253px;height:22px;background:#fbfbfb"></div>
<div style="left:511px;top:387px;width:474px;height:22px;background:#fefee6"></div>
<div class="dh" style="left:510px;top:408px;width:475px"></div>
<div class="dv" style="left:510px;top:387px;height:22px"></div>
<div class="dv" style="left:563px;top:387px;height:22px"></div>
<div class="dv" style="left:844px;top:387px;height:22px"></div>
<div class="dv" style="left:903px;top:387px;height:22px"></div>
<div class="t" style="left:320px;top:391px;letter-spacing:-0.08px">414 - Клиенти по продажби при ...</div>
<div class="t b" style="left:513px;top:391px">414</div>
<div class="t b" style="left:566px;top:391px">Клиенти по продажби при определени условия</div>
<div class="t b" style="left:847px;top:391px;letter-spacing:-0.1px">Активна</div>
<div class="t b" style="left:906px;top:391px;letter-spacing:-0.1px">Стойностна</div>
<div style="left:239px;top:409px;width:17px;height:22px;background:#f0f0f0;border-top:1px solid #fff;border-left:1px solid #fff"></div>
<div style="left:257px;top:409px;width:728px;height:22px;background:#b4d6f2"></div>
<div class="dh" style="left:510px;top:430px;width:475px"></div>
<div class="dv" style="left:510px;top:409px;height:22px;background-image:linear-gradient(#f4f8fc 50%,transparent 50%)"></div>
<div class="dv" style="left:563px;top:409px;height:22px;background-image:linear-gradient(#f4f8fc 50%,transparent 50%)"></div>
<div class="dv" style="left:844px;top:409px;height:22px;background-image:linear-gradient(#f4f8fc 50%,transparent 50%)"></div>
<div class="dv" style="left:903px;top:409px;height:22px;background-image:linear-gradient(#f4f8fc 50%,transparent 50%)"></div>
<div class="t" style="left:339px;top:413px;letter-spacing:-0.08px">4141 - Клиенти Картови пла...</div>
<div class="t" style="left:513px;top:413px">4141</div>
<div class="t" style="left:566px;top:413px">Клиенти Картови плащания ОББ</div>
<div class="t" style="left:847px;top:413px;letter-spacing:-0.1px">Активна</div>
<div class="t" style="left:906px;top:413px;letter-spacing:-0.1px">Стойностна</div>
<div style="left:239px;top:431px;width:17px;height:22px;background:#f0f0f0;border-top:1px solid #fff;border-left:1px solid #fff"></div>
<div style="left:257px;top:431px;width:728px;height:22px;background:#b4d6f2"></div>
<div class="dh" style="left:510px;top:452px;width:475px"></div>
<div class="dv" style="left:510px;top:431px;height:22px;background-image:linear-gradient(#f4f8fc 50%,transparent 50%)"></div>
<div class="dv" style="left:563px;top:431px;height:22px;background-image:linear-gradient(#f4f8fc 50%,transparent 50%)"></div>
<div class="dv" style="left:844px;top:431px;height:22px;background-image:linear-gradient(#f4f8fc 50%,transparent 50%)"></div>
<div class="dv" style="left:903px;top:431px;height:22px;background-image:linear-gradient(#f4f8fc 50%,transparent 50%)"></div>
<div class="t" style="left:339px;top:435px;letter-spacing:-0.08px">4142 - Клиенти Картови пла...</div>
<div class="t" style="left:513px;top:435px">4142</div>
<div class="t" style="left:566px;top:435px">Клиенти Картови плащания Уникредит</div>
<div class="t" style="left:847px;top:435px;letter-spacing:-0.1px">Активна</div>
<div class="t" style="left:906px;top:435px;letter-spacing:-0.1px">Стойностна</div>
<div style="left:239px;top:453px;width:17px;height:22px;background:#f0f0f0;border-top:1px solid #fff;border-left:1px solid #fff"></div>
<div style="left:257px;top:453px;width:253px;height:22px;background:#fbfbfb"></div>
<div style="left:511px;top:453px;width:474px;height:22px;background:#fefee6"></div>
<div class="dh" style="left:510px;top:474px;width:475px"></div>
<div class="dv" style="left:510px;top:453px;height:22px"></div>
<div class="dv" style="left:563px;top:453px;height:22px"></div>
<div class="dv" style="left:844px;top:453px;height:22px"></div>
<div class="dv" style="left:903px;top:453px;height:22px"></div>
<div class="t" style="left:320px;top:457px;letter-spacing:-0.08px">415 - Вземания по предоставени...</div>
<div class="t b" style="left:513px;top:457px">415</div>
<div class="t b" style="left:566px;top:457px">Вземания по предоставени фирмени кредити</div>
<div class="t b" style="left:847px;top:457px;letter-spacing:-0.1px">Активна</div>
<div class="t b" style="left:906px;top:457px;letter-spacing:-0.1px">Стойностна</div>
<div style="left:239px;top:475px;width:17px;height:22px;background:#f0f0f0;border-top:1px solid #fff;border-left:1px solid #fff"></div>
<div style="left:257px;top:475px;width:253px;height:22px;background:#fbfbfb"></div>
<div style="left:511px;top:475px;width:474px;height:22px;background:#fefee6"></div>
<div class="dh" style="left:510px;top:496px;width:475px"></div>
<div class="dv" style="left:510px;top:475px;height:22px"></div>
<div class="dv" style="left:563px;top:475px;height:22px"></div>
<div class="dv" style="left:844px;top:475px;height:22px"></div>
<div class="dv" style="left:903px;top:475px;height:22px"></div>
<div class="t" style="left:320px;top:479px;letter-spacing:-0.08px">416 - Разчети със свързани лица...</div>
<div class="t b" style="left:513px;top:479px">416</div>
<div class="t b" style="left:566px;top:479px">Разчети със свързани лица по продажби</div>
<div class="t b" style="left:847px;top:479px;letter-spacing:-0.1px">Активна</div>
<div class="t b" style="left:906px;top:479px;letter-spacing:-0.1px">Стойностна</div>
<div style="left:239px;top:497px;width:17px;height:22px;background:#f0f0f0;border-top:1px solid #fff;border-left:1px solid #fff"></div>
<div style="left:257px;top:497px;width:253px;height:22px;background:#fbfbfb"></div>
<div style="left:511px;top:497px;width:474px;height:22px;background:#fefee6"></div>
<div class="dh" style="left:510px;top:518px;width:475px"></div>
<div class="dv" style="left:510px;top:497px;height:22px"></div>
<div class="dv" style="left:563px;top:497px;height:22px"></div>
<div class="dv" style="left:844px;top:497px;height:22px"></div>
<div class="dv" style="left:903px;top:497px;height:22px"></div>
<div class="t" style="left:320px;top:501px;letter-spacing:-0.08px">417 - Протоколи за прихващане</div>
<div class="t b" style="left:513px;top:501px">417</div>
<div class="t b" style="left:566px;top:501px">Протоколи за прихващане</div>
<div class="t b" style="left:847px;top:501px;letter-spacing:-0.1px">Активна</div>
<div class="t b" style="left:906px;top:501px;letter-spacing:-0.1px">Стойностна</div>
<div class="dv" style="left:286px;top:187px;height:321px"></div>
<div class="dv" style="left:305px;top:209px;height:57px"></div>
<div class="dv" style="left:305px;top:275px;height:79px"></div>
<div class="dv" style="left:305px;top:407px;height:35px"></div>
<div class="g" style="left:256px;top:167px;width:1px;height:353px"></div>
<div class="g" style="left:238px;top:519px;width:19px;height:1px"></div>
<div style="left:264px;top:172px;width:9px;height:9px"><svg width="9" height="9" viewBox="0 0 9 9" style="position:absolute;left:0;top:0"><defs><linearGradient id="mg" x1="0" y1="0" x2="0" y2="1"><stop offset="0" stop-color="#fff"/><stop offset="0.5" stop-color="#f4f4f4"/><stop offset="1" stop-color="#dcdcdc"/></linearGradient></defs><rect x="0.5" y="0.5" width="8" height="8" rx="1.5" fill="url(#mg)" stroke="#8c8c8c" stroke-width="1"/><rect x="2" y="4" width="5" height="1.2" fill="#3050b0"/></svg></div>
<div class="dh" style="left:274px;top:177px;width:5px"></div>
<div style="left:280px;top:171px;width:16px;height:16px"><svg width="16" height="16" viewBox="0 0 16 16" style="position:absolute;left:0;top:0"><defs><linearGradient id="fb" x1="0" y1="0" x2="1" y2="1"><stop offset="0" stop-color="#fbe3a4"/><stop offset="1" stop-color="#eec46c"/></linearGradient><linearGradient id="ff" x1="0" y1="0" x2="1" y2="0"><stop offset="0" stop-color="#fff0b8"/><stop offset="1" stop-color="#f2d282"/></linearGradient></defs><path d="M0.5 0.5H12.5V14.5H0.5Z" fill="url(#fb)" stroke="#d8aa50" stroke-width="1"/><path d="M0.5 1L5.5 2.5V15.5L0.5 14Z" fill="url(#ff)" stroke="#d0a048" stroke-width="1"/><rect x="12" y="7" width="1.5" height="4" fill="#2aa0f0"/><rect x="12" y="6" width="1.5" height="1.5" fill="#fff"/></svg>
</div>
<div style="left:283px;top:194px;width:9px;height:9px"><svg width="9" height="9" viewBox="0 0 9 9" style="position:absolute;left:0;top:0"><defs><linearGradient id="mg" x1="0" y1="0" x2="0" y2="1"><stop offset="0" stop-color="#fff"/><stop offset="0.5" stop-color="#f4f4f4"/><stop offset="1" stop-color="#dcdcdc"/></linearGradient></defs><rect x="0.5" y="0.5" width="8" height="8" rx="1.5" fill="url(#mg)" stroke="#8c8c8c" stroke-width="1"/><rect x="2" y="4" width="5" height="1.2" fill="#3050b0"/></svg></div>
<div class="dh" style="left:293px;top:199px;width:5px"></div>
<div style="left:299px;top:193px;width:16px;height:16px"><svg width="16" height="16" viewBox="0 0 16 16" style="position:absolute;left:0;top:0"><defs><linearGradient id="fb" x1="0" y1="0" x2="1" y2="1"><stop offset="0" stop-color="#fbe3a4"/><stop offset="1" stop-color="#eec46c"/></linearGradient><linearGradient id="ff" x1="0" y1="0" x2="1" y2="0"><stop offset="0" stop-color="#fff0b8"/><stop offset="1" stop-color="#f2d282"/></linearGradient></defs><path d="M0.5 0.5H12.5V14.5H0.5Z" fill="url(#fb)" stroke="#d8aa50" stroke-width="1"/><path d="M0.5 1L5.5 2.5V15.5L0.5 14Z" fill="url(#ff)" stroke="#d0a048" stroke-width="1"/><rect x="12" y="7" width="1.5" height="4" fill="#2aa0f0"/><rect x="12" y="6" width="1.5" height="1.5" fill="#fff"/></svg>
</div>
<div class="dh" style="left:305px;top:221px;width:9px"></div>
<div style="left:319px;top:216px;width:12px;height:14px"><svg width="12" height="14" viewBox="0 0 12 14" style="position:absolute;left:0;top:0"><path d="M0.5 0.5H7L10.5 4V13.5H0.5Z" fill="#f2f8fa" stroke="#86989a" stroke-width="1" stroke-linejoin="round"/><path d="M7 0.5V4H10.5" fill="#fff" stroke="#86989a" stroke-width="1"/></svg>
</div>
<div class="dh" style="left:305px;top:243px;width:9px"></div>
<div style="left:319px;top:238px;width:12px;height:14px"><svg width="12" height="14" viewBox="0 0 12 14" style="position:absolute;left:0;top:0"><path d="M0.5 0.5H7L10.5 4V13.5H0.5Z" fill="#f2f8fa" stroke="#86989a" stroke-width="1" stroke-linejoin="round"/><path d="M7 0.5V4H10.5" fill="#fff" stroke="#86989a" stroke-width="1"/></svg>
</div>
<div class="dh" style="left:305px;top:265px;width:9px"></div>
<div style="left:319px;top:260px;width:12px;height:14px"><svg width="12" height="14" viewBox="0 0 12 14" style="position:absolute;left:0;top:0"><path d="M0.5 0.5H7L10.5 4V13.5H0.5Z" fill="#f2f8fa" stroke="#86989a" stroke-width="1" stroke-linejoin="round"/><path d="M7 0.5V4H10.5" fill="#fff" stroke="#86989a" stroke-width="1"/></svg>
</div>
<div style="left:283px;top:282px;width:9px;height:9px"><svg width="9" height="9" viewBox="0 0 9 9" style="position:absolute;left:0;top:0"><defs><linearGradient id="mg" x1="0" y1="0" x2="0" y2="1"><stop offset="0" stop-color="#fff"/><stop offset="0.5" stop-color="#f4f4f4"/><stop offset="1" stop-color="#dcdcdc"/></linearGradient></defs><rect x="0.5" y="0.5" width="8" height="8" rx="1.5" fill="url(#mg)" stroke="#8c8c8c" stroke-width="1"/><rect x="2" y="4" width="5" height="1.2" fill="#3050b0"/></svg></div>
<div class="dh" style="left:293px;top:287px;width:5px"></div>
<div style="left:299px;top:281px;width:16px;height:16px"><svg width="16" height="16" viewBox="0 0 16 16" style="position:absolute;left:0;top:0"><defs><linearGradient id="fb" x1="0" y1="0" x2="1" y2="1"><stop offset="0" stop-color="#fbe3a4"/><stop offset="1" stop-color="#eec46c"/></linearGradient><linearGradient id="ff" x1="0" y1="0" x2="1" y2="0"><stop offset="0" stop-color="#fff0b8"/><stop offset="1" stop-color="#f2d282"/></linearGradient></defs><path d="M0.5 0.5H12.5V14.5H0.5Z" fill="url(#fb)" stroke="#d8aa50" stroke-width="1"/><path d="M0.5 1L5.5 2.5V15.5L0.5 14Z" fill="url(#ff)" stroke="#d0a048" stroke-width="1"/><rect x="12" y="7" width="1.5" height="4" fill="#2aa0f0"/><rect x="12" y="6" width="1.5" height="1.5" fill="#fff"/></svg>
</div>
<div class="dh" style="left:305px;top:309px;width:9px"></div>
<div style="left:319px;top:304px;width:12px;height:14px"><svg width="12" height="14" viewBox="0 0 12 14" style="position:absolute;left:0;top:0"><path d="M0.5 0.5H7L10.5 4V13.5H0.5Z" fill="#f2f8fa" stroke="#86989a" stroke-width="1" stroke-linejoin="round"/><path d="M7 0.5V4H10.5" fill="#fff" stroke="#86989a" stroke-width="1"/></svg>
</div>
<div class="dh" style="left:305px;top:331px;width:9px"></div>
<div style="left:319px;top:326px;width:12px;height:14px"><svg width="12" height="14" viewBox="0 0 12 14" style="position:absolute;left:0;top:0"><path d="M0.5 0.5H7L10.5 4V13.5H0.5Z" fill="#f2f8fa" stroke="#86989a" stroke-width="1" stroke-linejoin="round"/><path d="M7 0.5V4H10.5" fill="#fff" stroke="#86989a" stroke-width="1"/></svg>
</div>
<div class="dh" style="left:305px;top:353px;width:9px"></div>
<div style="left:319px;top:348px;width:12px;height:14px"><svg width="12" height="14" viewBox="0 0 12 14" style="position:absolute;left:0;top:0"><path d="M0.5 0.5H7L10.5 4V13.5H0.5Z" fill="#f2f8fa" stroke="#86989a" stroke-width="1" stroke-linejoin="round"/><path d="M7 0.5V4H10.5" fill="#fff" stroke="#86989a" stroke-width="1"/></svg>
</div>
<div class="dh" style="left:286px;top:375px;width:9px"></div>
<div style="left:300px;top:370px;width:12px;height:14px"><svg width="12" height="14" viewBox="0 0 12 14" style="position:absolute;left:0;top:0"><path d="M0.5 0.5H7L10.5 4V13.5H0.5Z" fill="#f2f8fa" stroke="#86989a" stroke-width="1" stroke-linejoin="round"/><path d="M7 0.5V4H10.5" fill="#fff" stroke="#86989a" stroke-width="1"/></svg>
</div>
<div style="left:283px;top:392px;width:9px;height:9px"><svg width="9" height="9" viewBox="0 0 9 9" style="position:absolute;left:0;top:0"><defs><linearGradient id="mg" x1="0" y1="0" x2="0" y2="1"><stop offset="0" stop-color="#fff"/><stop offset="0.5" stop-color="#f4f4f4"/><stop offset="1" stop-color="#dcdcdc"/></linearGradient></defs><rect x="0.5" y="0.5" width="8" height="8" rx="1.5" fill="url(#mg)" stroke="#8c8c8c" stroke-width="1"/><rect x="2" y="4" width="5" height="1.2" fill="#3050b0"/></svg></div>
<div class="dh" style="left:293px;top:397px;width:5px"></div>
<div style="left:299px;top:391px;width:16px;height:16px"><svg width="16" height="16" viewBox="0 0 16 16" style="position:absolute;left:0;top:0"><defs><linearGradient id="fb" x1="0" y1="0" x2="1" y2="1"><stop offset="0" stop-color="#fbe3a4"/><stop offset="1" stop-color="#eec46c"/></linearGradient><linearGradient id="ff" x1="0" y1="0" x2="1" y2="0"><stop offset="0" stop-color="#fff0b8"/><stop offset="1" stop-color="#f2d282"/></linearGradient></defs><path d="M0.5 0.5H12.5V14.5H0.5Z" fill="url(#fb)" stroke="#d8aa50" stroke-width="1"/><path d="M0.5 1L5.5 2.5V15.5L0.5 14Z" fill="url(#ff)" stroke="#d0a048" stroke-width="1"/><rect x="12" y="7" width="1.5" height="4" fill="#2aa0f0"/><rect x="12" y="6" width="1.5" height="1.5" fill="#fff"/></svg>
</div>
<div class="dh" style="left:305px;top:419px;width:9px"></div>
<div style="left:319px;top:414px;width:12px;height:14px"><svg width="12" height="14" viewBox="0 0 12 14" style="position:absolute;left:0;top:0"><path d="M0.5 0.5H7L10.5 4V13.5H0.5Z" fill="#f2f8fa" stroke="#86989a" stroke-width="1" stroke-linejoin="round"/><path d="M7 0.5V4H10.5" fill="#fff" stroke="#86989a" stroke-width="1"/></svg>
</div>
<div class="dh" style="left:305px;top:441px;width:9px"></div>
<div style="left:319px;top:436px;width:12px;height:14px"><svg width="12" height="14" viewBox="0 0 12 14" style="position:absolute;left:0;top:0"><path d="M0.5 0.5H7L10.5 4V13.5H0.5Z" fill="#f2f8fa" stroke="#86989a" stroke-width="1" stroke-linejoin="round"/><path d="M7 0.5V4H10.5" fill="#fff" stroke="#86989a" stroke-width="1"/></svg>
</div>
<div class="dh" style="left:286px;top:463px;width:9px"></div>
<div style="left:300px;top:458px;width:12px;height:14px"><svg width="12" height="14" viewBox="0 0 12 14" style="position:absolute;left:0;top:0"><path d="M0.5 0.5H7L10.5 4V13.5H0.5Z" fill="#f2f8fa" stroke="#86989a" stroke-width="1" stroke-linejoin="round"/><path d="M7 0.5V4H10.5" fill="#fff" stroke="#86989a" stroke-width="1"/></svg>
</div>
<div class="dh" style="left:286px;top:485px;width:9px"></div>
<div style="left:300px;top:480px;width:12px;height:14px"><svg width="12" height="14" viewBox="0 0 12 14" style="position:absolute;left:0;top:0"><path d="M0.5 0.5H7L10.5 4V13.5H0.5Z" fill="#f2f8fa" stroke="#86989a" stroke-width="1" stroke-linejoin="round"/><path d="M7 0.5V4H10.5" fill="#fff" stroke="#86989a" stroke-width="1"/></svg>
</div>
<div class="dh" style="left:286px;top:507px;width:9px"></div>
<div style="left:300px;top:502px;width:12px;height:14px"><svg width="12" height="14" viewBox="0 0 12 14" style="position:absolute;left:0;top:0"><path d="M0.5 0.5H7L10.5 4V13.5H0.5Z" fill="#f2f8fa" stroke="#86989a" stroke-width="1" stroke-linejoin="round"/><path d="M7 0.5V4H10.5" fill="#fff" stroke="#86989a" stroke-width="1"/></svg>
</div>
<div style="left:257px;top:409px;width:728px;height:22px;border:1px dotted #4a2a10"></div>
<svg style="position:absolute;left:244px;top:411px" width="9" height="14"><path d="M1 1V13L7 7Z" fill="#000"/></svg>
<div style="left:239px;top:628px;width:747px;height:1px;background:#e6e6e6"></div>
<div style="left:239px;top:629px;width:748px;height:19px;background:#f0f0f0"></div>
<div class="t" style="left:243px;top:632px">Запис:</div>
<svg style="position:absolute;left:280px;top:629px" width="708" height="19" viewBox="280 629 708 19">
<defs><linearGradient id="nb" x1="0" y1="0" x2="0" y2="1"><stop offset="0" stop-color="#fdfdfd"/><stop offset="1" stop-color="#e8e8e8"/></linearGradient></defs>
<!-- first -->
<rect x="283.5" y="630.5" width="17" height="16" fill="url(#nb)" stroke="#b0b0b0" stroke-width="1"/>
<path d="M300.5 631V646.5H284" fill="none" stroke="#909090" stroke-width="1"/>
<rect x="287" y="634" width="2" height="9" fill="#000"/>
<path d="M296 633.5V643.5L290 638.5Z" fill="#000"/>
<!-- prev -->
<rect x="301.5" y="630.5" width="17" height="16" fill="url(#nb)" stroke="#b0b0b0" stroke-width="1"/>
<path d="M318.5 631V646.5H302" fill="none" stroke="#909090" stroke-width="1"/>
<path d="M313 633.5V643.5L307 638.5Z" fill="#000"/>
<!-- input -->
<rect x="323.5" y="630.5" width="45" height="17" fill="#fff" stroke="#a0a0a0" stroke-width="1"/>
<!-- next -->
<rect x="408.5" y="630.5" width="17" height="16" fill="url(#nb)" stroke="#b0b0b0" stroke-width="1"/>
<path d="M425.5 631V646.5H409" fill="none" stroke="#909090" stroke-width="1"/>
<path d="M414 633.5V643.5L420 638.5Z" fill="#000"/>
<!-- last -->
<rect x="426.5" y="630.5" width="17" height="16" fill="url(#nb)" stroke="#b0b0b0" stroke-width="1"/>
<path d="M443.5 631V646.5H427" fill="none" stroke="#909090" stroke-width="1"/>
<path d="M431 633.5V643.5L437 638.5Z" fill="#000"/>
<rect x="438" y="634" width="2" height="9" fill="#000"/>
<!-- scroll -->
<path d="M454.5 635L451 638.5L454.5 642" fill="none" stroke="#606060" stroke-width="1.6"/>
<rect x="461" y="631" width="56" height="15" fill="#cdcdcd"/>
<path d="M973.5 635L977 638.5L973.5 642" fill="none" stroke="#606060" stroke-width="1.6"/>
</svg>
<div class="t" style="left:325px;top:632px;width:41px;text-align:right">12</div>
<div class="t" style="left:374px;top:632px">от 16</div>

<div class="g" style="left:986px;top:32px;width:1px;height:23px;opacity:0.6"></div>
<div style="left:0;top:0;width:988px;height:1px;background:#1b3656"></div>
<div style="left:0;top:0;width:1px;height:649px;background:#1b3656"></div>
<div style="left:987px;top:0;width:1px;height:649px;background:#1b3656"></div>
<div style="left:0;top:648px;width:988px;height:1px;background:#1b3656"></div>
</body></html>
